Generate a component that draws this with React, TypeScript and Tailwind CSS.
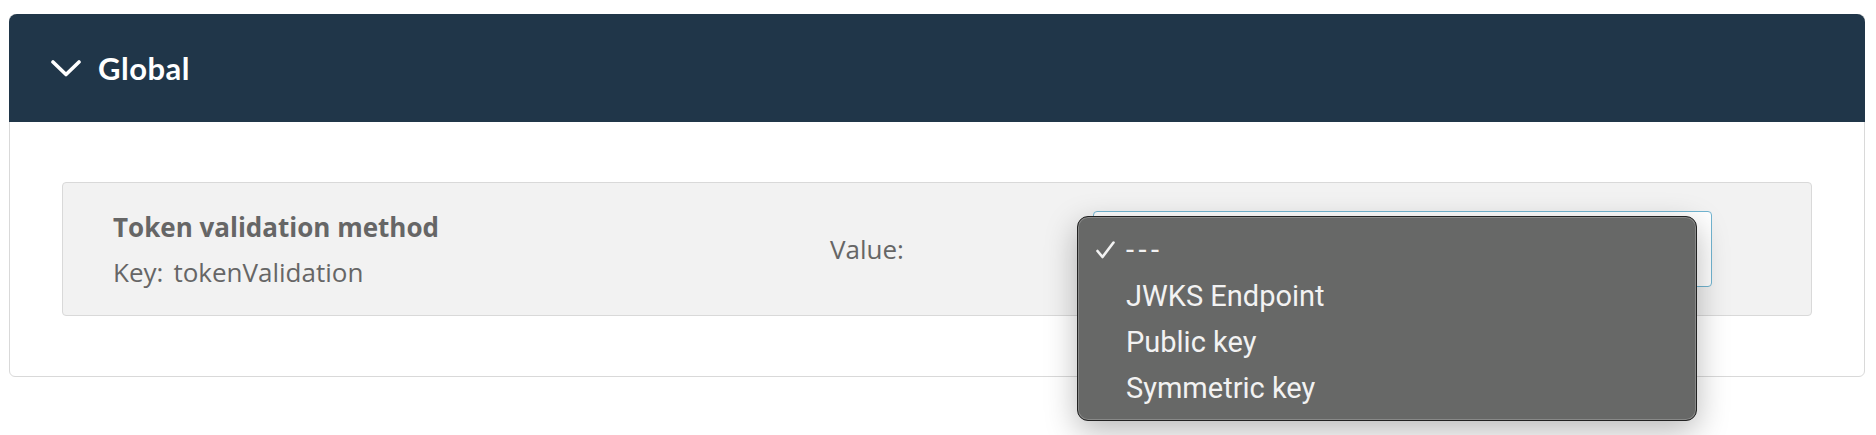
import React from "react";

function Chevron() {
  return (
    <svg width="30" height="17" viewBox="0 0 30 17" fill="none">
      <polyline points="2,2 15,14.5 28,2" stroke="#ffffff" strokeWidth="3.6" strokeLinecap="round" strokeLinejoin="round" />
    </svg>
  );
}

function Check() {
  return (
    <svg width="19" height="18" viewBox="0 0 19 18" fill="none">
      <polyline points="1.5,10 6.5,16 17.5,1.5" stroke="#f2f2f2" strokeWidth="2.6" strokeLinecap="round" strokeLinejoin="round" />
    </svg>
  );
}

export default function App() {
  const items = ["JWKS Endpoint", "Public key", "Symmetric key"];
  return (
    <div className="w-[1876px] h-[435px] bg-white overflow-hidden">
      <div className="ml-[9px] mr-[11px] mt-[14px] border border-[#d9d9d9] rounded-[6px]">
        <div className="h-[108px] -m-px bg-[#203649] rounded-t-[8px] flex items-center pl-[42px] gap-[17px]">
          <Chevron />
          <span
            className="text-white text-[31px] font-bold tracking-[0.5px] leading-none"
            style={{ fontFamily: "Lato, 'Open Sans', sans-serif" }}
          >
            Global
          </span>
        </div>
        <div className="px-[52px] pt-[61px] pb-[60px]">
          <div
            className="bg-[#f2f2f2] border border-[#d9d9d9] rounded-[4px] h-[134px] flex items-center text-[#666666] text-[26px] leading-[36px]"
            style={{ fontFamily: "'Open Sans', sans-serif" }}
          >
            <div className="w-[767px] pl-[50px] flex flex-col gap-[9px]">
              <div className="font-bold">Token validation method</div>
              <div>
                Key:<span className="ml-[10px]">tokenValidation</span>
              </div>
            </div>
            <div className="w-[263px]">Value:</div>
            <div className="relative w-[619px] h-[76px] bg-white border-[1.5px] border-[#72b5d1] rounded-[4px]">
              <div
                className="absolute left-[-17px] top-[4px] w-[620px] bg-[#676867] border border-[#222222] rounded-[11px] pt-[10px] pb-[9px] shadow-[inset_0_0_0_1px_rgba(255,255,255,0.22),0_10px_32px_rgba(0,0,0,0.28)] text-[#f2f2f2] text-[29px] leading-[46px]"
                style={{ fontFamily: "Roboto, 'Liberation Sans', sans-serif" }}
              >
                <div className="flex items-center h-[46px]">
                  <div className="w-[48px] flex justify-end pr-[11px]">
                    <Check />
                  </div>
                  <span className="tracking-[4.5px]">---</span>
                </div>
                {items.map((t) => (
                  <div key={t} className="h-[46px] pl-[48px]">
                    {t}
                  </div>
                ))}
              </div>
            </div>
          </div>
        </div>
      </div>
    </div>
  );
}
